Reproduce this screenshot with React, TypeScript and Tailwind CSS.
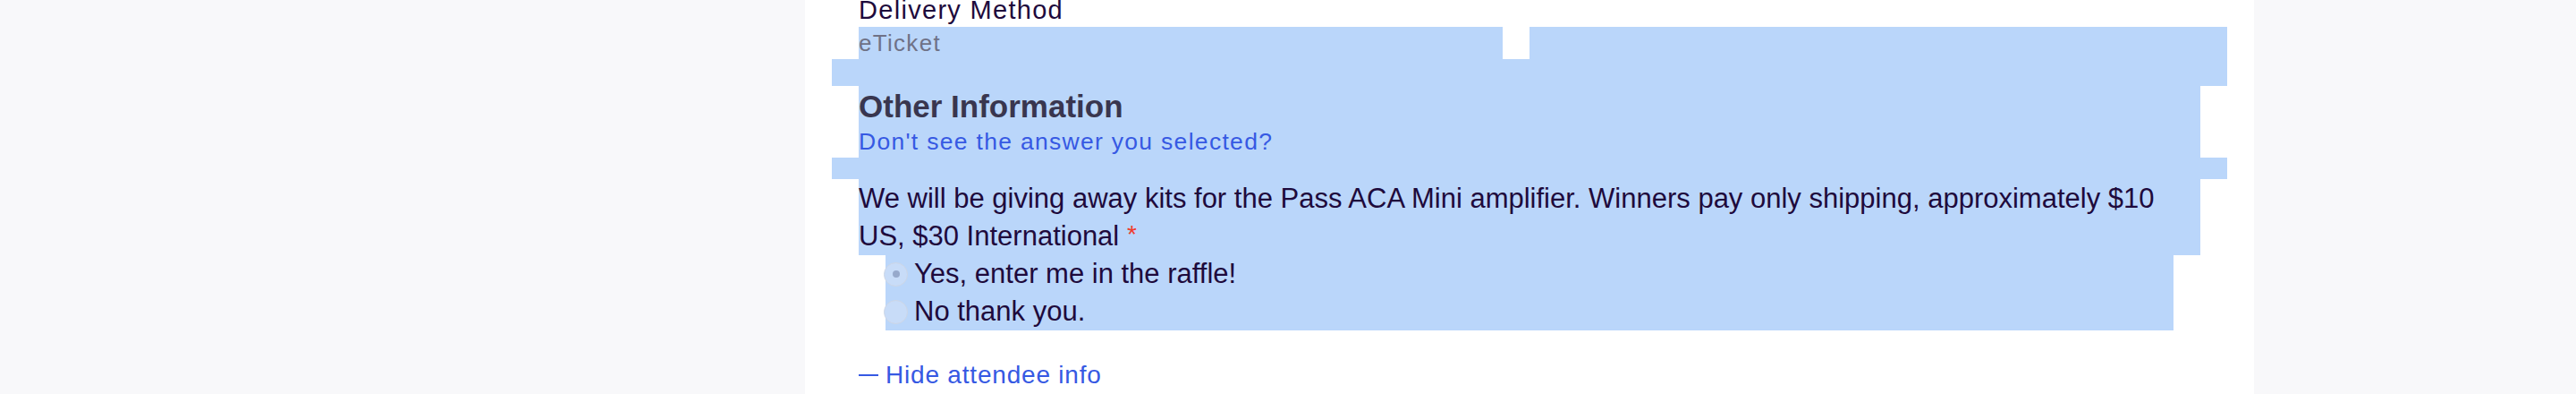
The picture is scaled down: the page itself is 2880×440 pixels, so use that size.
import React from "react";

const hl = "bg-[#bad6fa]";

type RadioOptionProps = {
  label: string;
  checked?: boolean;
};

function RadioOption({ label, checked = false }: RadioOptionProps) {
  return (
    <label className="flex h-[42px] items-center gap-[7px]">
      <span className="-ml-[2px] flex h-[27px] w-[27px] shrink-0 items-center justify-center rounded-full border border-[#cdd6e6] bg-[#c8dcf8]">
        {checked && <span className="h-[8px] w-[8px] rounded-full bg-[#97a9cb]" />}
      </span>
      <span className="text-[31px] leading-[42px] text-[#1e0a3c]">{label}</span>
    </label>
  );
}

export default function App() {
  return (
    <div className="h-[440px] w-full overflow-hidden bg-[#f8f8fa] font-['Liberation_Sans',Arial,sans-serif]">
      <div className="ml-[900px] flow-root h-full w-[1620px] bg-white px-[30px]">
        {/* delivery */}
        <div className="-mt-[8px] pl-[30px] text-[29px] leading-[38px] tracking-[1.3px] text-[#1e0a3c]">
          Delivery Method
        </div>
        <div className="flex h-[36px]">
          <div className="w-[30px] shrink-0" />
          <div className={`w-[720px] shrink-0 ${hl} text-[26px] leading-[36px] tracking-[1.3px] text-[#6f7287]`}>
            eTicket
          </div>
          <div className="w-[30px] shrink-0" />
          <div className={`flex-1 ${hl}`} />
        </div>
        <div className={`h-[30px] ${hl}`} />

        {/* other information */}
        <div className={`mx-[30px] ${hl}`}>
          <h3 className="pt-[2px] text-[35px] font-semibold leading-[42px] text-[#39364f]">
            Other Information
          </h3>
          <a className="block text-[26.5px] leading-[36px] tracking-[1.3px] text-[#3659e3]">
            Don&apos;t see the answer you selected?
          </a>
        </div>
        <div className={`h-[24px] ${hl}`} />

        {/* raffle question */}
        <p className={`mx-[30px] ${hl} pt-[1px] text-[31px] leading-[42px] text-[#1e0a3c]`}>
          We will be giving away kits for the Pass ACA Mini amplifier. Winners pay only shipping, approximately $10
          <br />
          US, $30 International{" "}
          <span className="relative -top-[3px] text-[28px] leading-none text-[#ef3b2d]">*</span>
        </p>
        <div className={`mx-[60px] ${hl}`}>
          <RadioOption label="Yes, enter me in the raffle!" checked />
          <RadioOption label="No thank you." />
        </div>

        <button
          type="button"
          className="mt-[32px] ml-[30px] flex items-center gap-[8px] text-[28px] leading-[36px] tracking-[0.8px] text-[#3659e3]"
        >
          <span className="h-[2px] w-[22px] bg-[#3659e3]" />
          Hide attendee info
        </button>
      </div>
    </div>
  );
}
